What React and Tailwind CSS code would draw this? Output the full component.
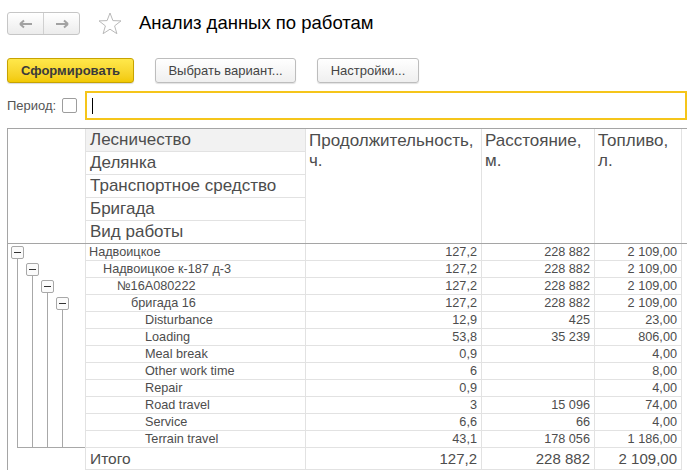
const ROWS = [
  { name: 'Надвоицкое', level: 0, dur: '127,2', dist: '228 882', fuel: '2 109,00' },
  { name: 'Надвоицкое к-187 д-3', level: 1, dur: '127,2', dist: '228 882', fuel: '2 109,00' },
  { name: '№16А080222', level: 2, dur: '127,2', dist: '228 882', fuel: '2 109,00' },
  { name: 'бригада 16', level: 3, dur: '127,2', dist: '228 882', fuel: '2 109,00' },
  { name: 'Disturbance', level: 4, dur: '12,9', dist: '425', fuel: '23,00' },
  { name: 'Loading', level: 4, dur: '53,8', dist: '35 239', fuel: '806,00' },
  { name: 'Meal break', level: 4, dur: '0,9', dist: '', fuel: '4,00' },
  { name: 'Other work time', level: 4, dur: '6', dist: '', fuel: '8,00' },
  { name: 'Repair', level: 4, dur: '0,9', dist: '', fuel: '4,00' },
  { name: 'Road travel', level: 4, dur: '3', dist: '15 096', fuel: '74,00' },
  { name: 'Service', level: 4, dur: '6,6', dist: '66', fuel: '4,00' },
  { name: 'Terrain travel', level: 4, dur: '43,1', dist: '178 056', fuel: '1 186,00' },
]

const GROUPS = ['Делянка', 'Транспортное средство', 'Бригада']

const INDENT = ['pl-[3px]', 'pl-[17px]', 'pl-[31px]', 'pl-[45px]', 'pl-[59px]']

function TreeLines() {
  // boxes with a minus, one per group level, lines drop down to the end of the group
  const boxes = [
    { x: 3, y: 2 },
    { x: 18, y: 19 },
    { x: 33, y: 36 },
    { x: 48, y: 53 },
  ]
  return (
    <svg width="77" height="226" className="block">
      {boxes.map((b, i) => (
        <g key={i}>
          <line x1={b.x + 6.5} y1={b.y + 12} x2={b.x + 6.5} y2="203.5" stroke="#a8a8a8" strokeWidth="1" />
          <rect x={b.x + 0.5} y={b.y + 0.5} width="12" height="12" rx="1.5" fill="#fbfbfb" stroke="#a8a8a8" />
          <line x1={b.x + 3} y1={b.y + 6.5} x2={b.x + 10} y2={b.y + 6.5} stroke="#333" strokeWidth="1" />
        </g>
      ))}
      <line x1="9" y1="203.5" x2="77" y2="203.5" stroke="#a8a8a8" strokeWidth="1" />
    </svg>
  )
}

function NumCell({ value, width, big }) {
  return (
    <div className={`${width} shrink-0 border-r border-[#e2e2e2] pr-[4px] text-right ${big ? 'text-[15px]' : ''}`}>
      {value}
    </div>
  )
}

export default function App() {
  return (
    <div
      className="w-[687px] h-[473px] overflow-hidden bg-white text-[#4d4d4d]"
      style={{ fontFamily: '"Liberation Sans", Arial, sans-serif' }}
    >
      {/* Title bar */}
      <div className="flex items-center pt-[12px] pl-[7px] h-[35px]">
        <div className="flex w-[73px] h-[23px] rounded-[3px] border border-[#c6c6c6] bg-gradient-to-b from-white to-[#ececec]">
          <div className="flex-1 flex items-center justify-center border-r border-[#d0d0d0]">
            <svg width="14" height="10" viewBox="0 0 14 10">
              <path d="M1 5 H13 M1 5 L5 1.5 M1 5 L5 8.5" stroke="#a2a2a2" strokeWidth="2" fill="none" />
            </svg>
          </div>
          <div className="flex-1 flex items-center justify-center">
            <svg width="14" height="10" viewBox="0 0 14 10">
              <path d="M1 5 H13 M13 5 L9 1.5 M13 5 L9 8.5" stroke="#a2a2a2" strokeWidth="2" fill="none" />
            </svg>
          </div>
        </div>
        <svg width="24" height="23" viewBox="0 0 24 23" className="ml-[18px]">
          <polygon
            points="12,1 14.9,8.6 23,8.9 16.6,13.9 18.9,21.7 12,17.2 5.1,21.7 7.4,13.9 1,8.9 9.1,8.6"
            fill="white"
            stroke="#b9b9b9"
            strokeWidth="1"
            strokeLinejoin="round"
          />
        </svg>
        <div className="ml-[17px] text-[18.5px] text-black leading-none pb-[1px]">Анализ данных по работам</div>
      </div>

      {/* Command bar */}
      <div className="flex items-center mt-[23px] pl-[7px] h-[25px] text-[13px]">
        <button className="w-[127px] h-[25px] rounded-[3px] border border-[#c7a300] bg-gradient-to-b from-[#ffe84a] to-[#f2c900] font-bold text-[#3a3a3a] shadow-[0_1px_1px_rgba(0,0,0,0.15)]">
          Сформировать
        </button>
        <button className="ml-[21px] w-[141px] h-[25px] rounded-[3px] border border-[#bdbdbd] bg-gradient-to-b from-white to-[#efefef] text-[#444] shadow-[0_1px_1px_rgba(0,0,0,0.12)]">
          Выбрать вариант...
        </button>
        <button className="ml-[21px] w-[102px] h-[25px] rounded-[3px] border border-[#bdbdbd] bg-gradient-to-b from-white to-[#efefef] text-[#444] shadow-[0_1px_1px_rgba(0,0,0,0.12)]">
          Настройки...
        </button>
      </div>

      {/* Period */}
      <div className="flex items-center mt-[8px] pl-[7px] h-[29px]">
        <span className="text-[13px] text-[#555]">Период:</span>
        <div className="ml-[6px] w-[15px] h-[15px] rounded-[2px] border border-[#9d9d9d] bg-white" />
        <div className="ml-[8px] flex-1 h-[29px] border-2 border-[#f5c51a] flex items-center pl-[5px]">
          <div className="w-px h-[16px] bg-black" />
        </div>
      </div>

      {/* Report table */}
      <div className="mt-[8px] ml-[7px] border-l border-t border-[#a5a5a5]">
        {/* header */}
        <div className="flex border-b border-[#a5a5a5] h-[115px]">
          <div className="w-[78px] shrink-0 border-r border-[#e2e2e2]" />
          <div className="w-[220px] shrink-0 border-r border-[#e2e2e2] text-[17px]">
            <div className="h-[23px] leading-[22px] pl-[4px] bg-[#f2f2f2] border-b border-[#e2e2e2]">Лесничество</div>
            {GROUPS.map(g => (
              <div key={g} className="h-[23px] leading-[22px] pl-[4px] border-b border-[#e2e2e2]">{g}</div>
            ))}
            <div className="h-[22px] leading-[22px] pl-[4px]">Вид работы</div>
          </div>
          <div className="w-[176px] shrink-0 border-r border-[#e2e2e2] text-[17px] leading-[20px] pl-[3px] pt-[2px]">
            Продолжительность,<br />ч.
          </div>
          <div className="w-[113px] shrink-0 border-r border-[#e2e2e2] text-[17px] leading-[20px] pl-[3px] pt-[2px]">
            Расстояние,<br />м.
          </div>
          <div className="w-[87px] shrink-0 border-r border-[#e2e2e2] text-[17px] leading-[20px] pl-[3px] pt-[2px]">
            Топливо,<br />л.
          </div>
        </div>

        {/* body */}
        <div className="flex">
          <div className="w-[78px] shrink-0 border-r border-[#e2e2e2]">
            <TreeLines />
          </div>
          <div>
            {ROWS.map(r => (
              <div key={r.name} className="flex h-[17px] leading-[16px] text-[12.7px] border-b border-[#e2e2e2]">
                <div className={`w-[220px] shrink-0 border-r border-[#e2e2e2] ${INDENT[r.level]}`}>{r.name}</div>
                <NumCell value={r.dur} width="w-[176px]" />
                <NumCell value={r.dist} width="w-[113px]" />
                <NumCell value={r.fuel} width="w-[87px]" />
              </div>
            ))}
            <div className="flex h-[22px] leading-[21px] text-[15.5px] border-b border-[#e2e2e2]">
              <div className="w-[220px] shrink-0 border-r border-[#e2e2e2] pl-[4px]">Итого</div>
              <NumCell value="127,2" width="w-[176px]" big />
              <NumCell value="228 882" width="w-[113px]" big />
              <NumCell value="2 109,00" width="w-[87px]" big />
            </div>
          </div>
        </div>
      </div>
    </div>
  )
}
